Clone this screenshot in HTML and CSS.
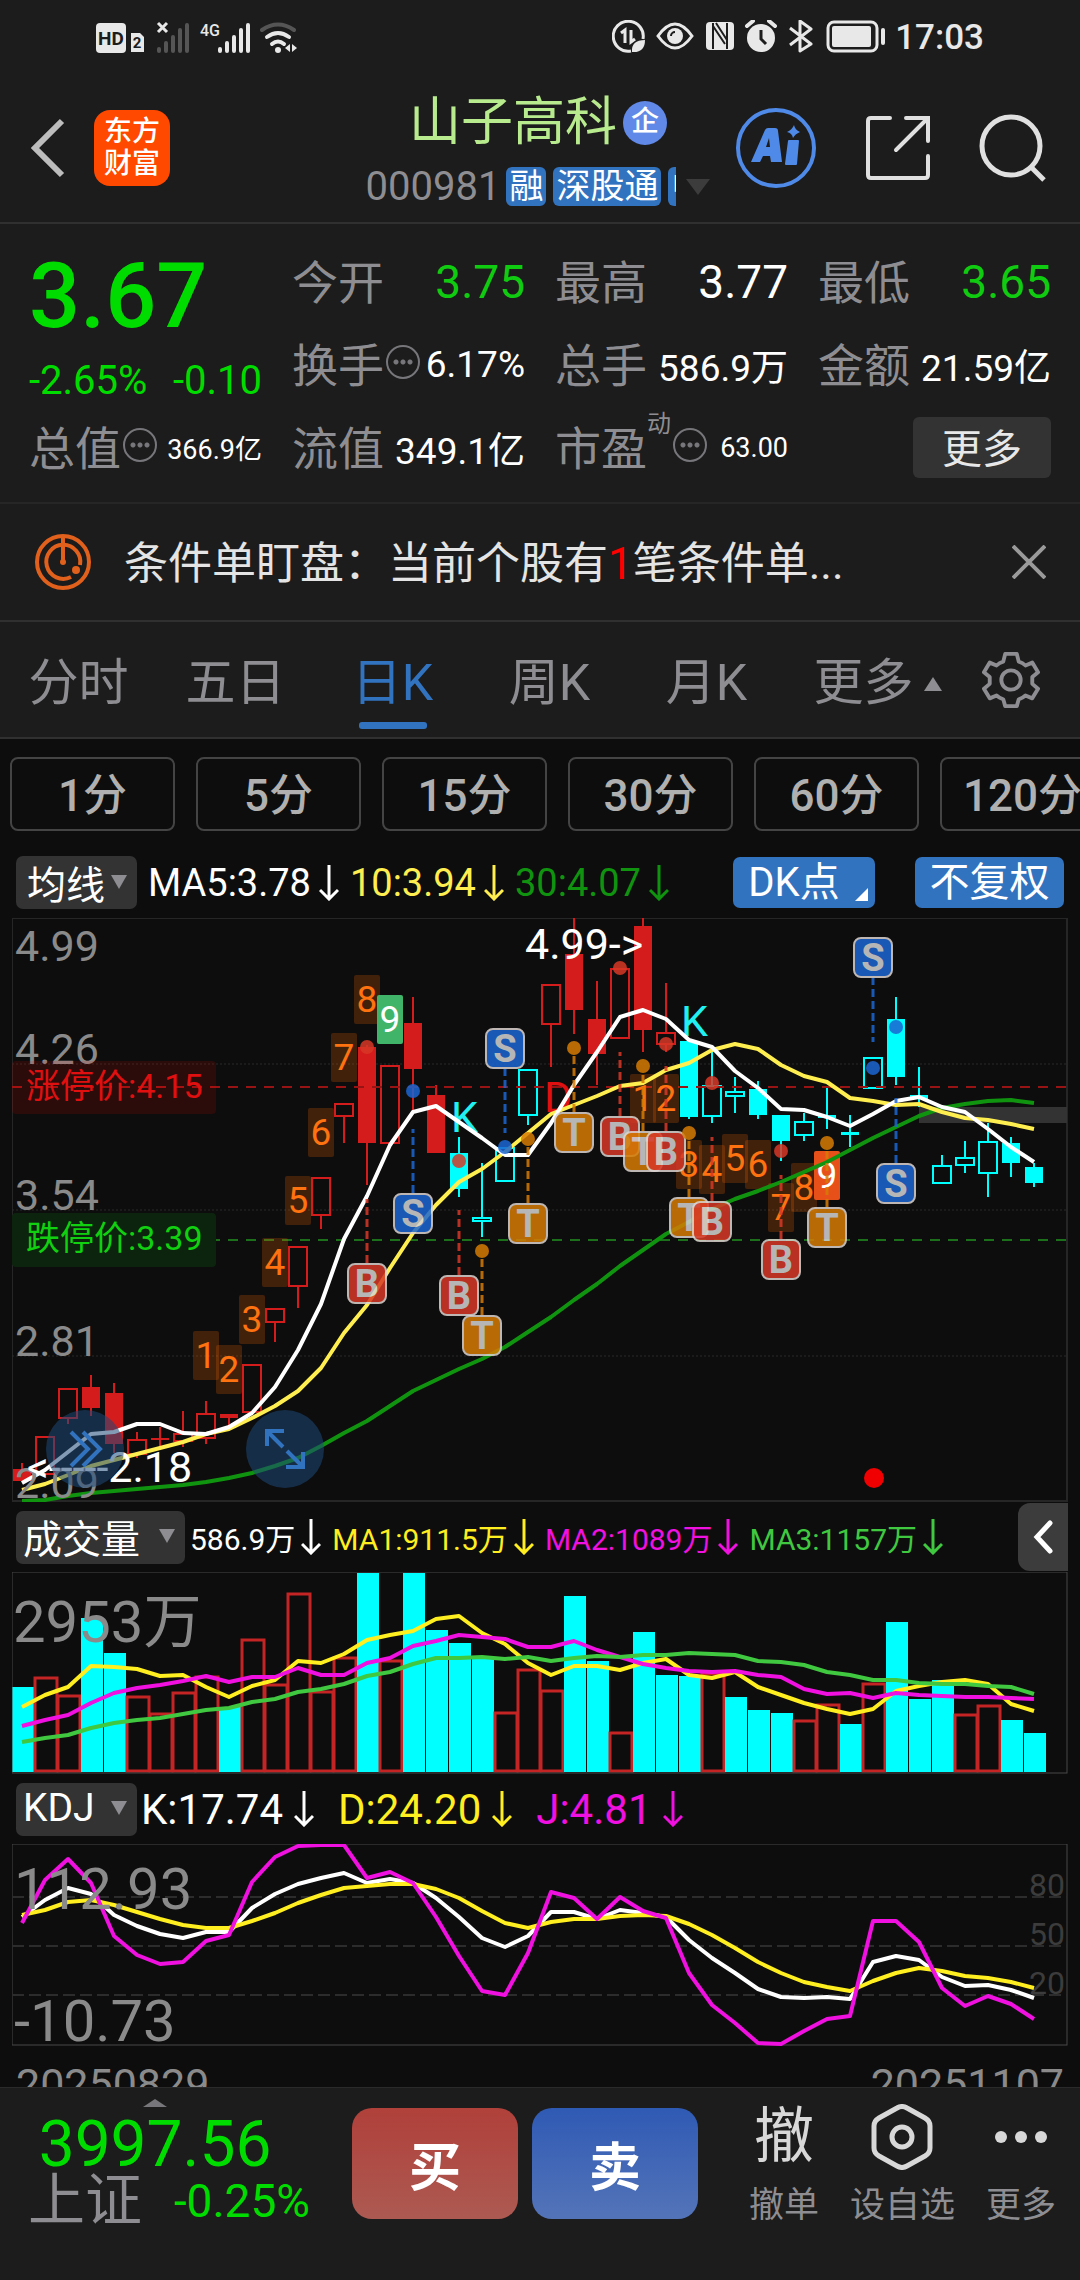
FILE: index.html
```html
<!DOCTYPE html>
<html lang="zh-CN">
<head>
    <meta charset="UTF-8">
    <meta name="viewport" content="width=device-width, initial-scale=1.0">
    <title>山子高科 000981</title>
    <link rel="stylesheet" href="styles.css">
</head>
<body>
    <div class="status-bar">
        <div class="status-group">
            <svg width="202" height="32" viewBox="0 0 202 32" aria-hidden="true">
                <rect x="0" y="2" width="30" height="30" rx="4" fill="#e8e8e8"/>
                <text x="15" y="24" font-size="19" font-weight="700" fill="#1c1c1c" text-anchor="middle">HD</text>
                <path d="M35 12h9l4 4v15H35z" fill="#e8e8e8"/>
                <text x="41" y="27" font-size="15" font-weight="700" fill="#1c1c1c" text-anchor="middle">2</text>
                <path d="M62 2l9 9M71 2l-9 9" stroke="#e8e8e8" stroke-width="3"/>
                <path d="M63 28v2M70 22v8M77 16v14M84 9v21M91 4v26" stroke="#555" stroke-width="4" stroke-linecap="round"/>
                <text x="104" y="15" font-size="16" font-weight="500" fill="#e8e8e8">4G</text>
                <path d="M124 28v2M131 22v8M138 16v14M145 9v21M152 4v26" stroke="#e8e8e8" stroke-width="4" stroke-linecap="round"/>
                <g fill="none" stroke-width="4" stroke-linecap="round">
                    <path d="M166 9q16-11 32 0" stroke="#555"/>
                    <path d="M171 16q11-8 22 0M176 23q6-5 12 0" stroke="#e8e8e8"/>
                </g>
                <circle cx="182" cy="29" r="3" fill="#e8e8e8"/>
                <path d="M189 27l5-4v8zM196 23l5 4-5 4z" fill="#e8e8e8"/>
            </svg>
        </div>
        <div class="status-group">
            <svg width="275" height="34" viewBox="0 0 275 34" aria-hidden="true">
                <g fill="none" stroke="#e8e8e8" stroke-width="3">
                    <path d="M31 19a15 15 0 1 0-12 12"/>
                    <path d="M9 13l4-3v13M19 10v12l4-3" stroke-width="3"/>
                    <path d="M46 16q17-24 34 0q-17 24-34 0z"/>
                </g>
                <path d="M20 32q-1-12 13-12q0 13-13 12z" fill="#e8e8e8"/>
                <circle cx="63" cy="16" r="8" fill="#e8e8e8"/>
                <path d="M59 16a4 4 0 0 1 4-4" stroke="#1c1c1c" stroke-width="2" fill="none"/>
                <rect x="94" y="2" width="28" height="28" rx="4" fill="#e8e8e8"/>
                <path d="M101 3v26M101 6l12 18M115 29V3M104 3l11 17" stroke="#1c1c1c" stroke-width="2" fill="none"/>
                <circle cx="149" cy="18" r="14" fill="#e8e8e8"/>
                <path d="M149 10v9l5 5" stroke="#1c1c1c" stroke-width="3" fill="none"/>
                <path d="M135 6l6-5M157 1l6 5" stroke="#e8e8e8" stroke-width="4" stroke-linecap="round"/>
                <path d="M178 8l21 16-11 7V1l11 8-21 16" stroke="#e8e8e8" stroke-width="3" fill="none" stroke-linejoin="round"/>
                <rect x="216" y="2" width="49" height="29" rx="6" fill="none" stroke="#e8e8e8" stroke-width="3"/>
                <rect x="220" y="6" width="39" height="21" rx="2" fill="#e8e8e8"/>
                <path d="M271 10v13" stroke="#e8e8e8" stroke-width="4" stroke-linecap="round"/>
            </svg>
            <span class="clock">17:03</span>
        </div>
    </div>

    <header class="header">
        <button class="icon-btn" aria-label="返回">
            <svg width="34" height="60" viewBox="0 0 34 60"><path d="M31 3L4 30l27 27" fill="none" stroke="#bdbdbd" stroke-width="6"/></svg>
        </button>
        <a href="#" class="logo">东方<br>财富</a>
        <div class="title-block">
            <div class="title-row">
                <h1>山子高科</h1>
                <span class="company-badge">企</span>
            </div>
            <div class="code-row">
                <span class="code">000981</span>
                <div class="tags">
                    <span class="tag">融</span>
                    <span class="tag">深股通</span>
                    <span class="tag">中</span>
                </div>
                <svg width="24" height="16" viewBox="0 0 24 16"><path d="M0 0h24L12 16z" fill="#3c3c3c"/></svg>
            </div>
        </div>
        <div class="header-actions">
            <button class="icon-btn" aria-label="AI">
                <svg width="82" height="82" viewBox="0 0 82 82">
                    <circle cx="41" cy="41" r="38" fill="none" stroke="#4f8ae8" stroke-width="4"/>
                    <path d="M16 55l14-32q1-2 3-2h7q3 0 3 3l4 31h-11l-1-6h-7l-3 6zM31 40h4l-1-9z" fill="#4f8ae8"/>
                    <path d="M54 34h9l-2 23h-10z" fill="#4f8ae8" stroke="#4f8ae8" stroke-width="2" stroke-linejoin="round"/>
                    <path d="M59 18q1 5 6 7q-5 2-7 6q-1-5-6-6q5-2 7-7z" fill="#4f8ae8"/>
                </svg>
            </button>
            <button class="icon-btn" aria-label="分享">
                <svg width="66" height="66" viewBox="0 0 66 66"><path d="M25 3H6q-3 0-3 3v54q0 3 3 3h54q3 0 3-3V41M41 3h22v23M62 4L31 35" fill="none" stroke="#e0e0e0" stroke-width="4" stroke-linecap="round"/></svg>
            </button>
            <button class="icon-btn" aria-label="搜索">
                <svg width="68" height="68" viewBox="0 0 68 68"><circle cx="32" cy="32" r="29" fill="none" stroke="#e0e0e0" stroke-width="5"/><path d="M52 53l13 13" stroke="#e0e0e0" stroke-width="5"/></svg>
            </button>
        </div>
    </header>

    <section class="quote">
        <div class="price-cell">
            <div class="price">3.67</div>
            <div class="change"><span>-2.65%</span><span>-0.10</span></div>
        </div>
        <div class="cell"><span class="name">今开</span><span class="big green">3.75</span></div>
        <div class="cell"><span class="name">最高</span><span class="big">3.77</span></div>
        <div class="cell"><span class="name">最低</span><span class="big green">3.65</span></div>
        <div class="cell"><span class="name">换手<i class="more-dots"></i></span><span class="mid">6.17%</span></div>
        <div class="cell"><span class="name">总手</span><span class="mid">586.9万</span></div>
        <div class="cell"><span class="name">金额</span><span class="mid">21.59亿</span></div>
        <div class="cell"><span class="name">总值<i class="more-dots"></i></span><span class="small">366.9亿</span></div>
        <div class="cell"><span class="name">流值</span><span class="mid">349.1亿</span></div>
        <div class="cell"><span class="name">市盈<sup>动</sup><i class="more-dots"></i></span><span class="small">63.00</span></div>
        <div class="cell cell-right"><button class="more-btn">更多</button></div>
    </section>

    <section class="alert">
        <svg width="58" height="58" viewBox="0 0 58 58" fill="none" stroke="#e0601c" stroke-width="4">
            <circle cx="29" cy="29" r="26"/>
            <path d="M37 44a17 17 0 1 1 9-12"/>
            <path d="M29 4v26"/>
            <circle cx="29" cy="29" r="3" fill="#e0601c" stroke="none"/>
            <circle cx="42" cy="37" r="4" fill="#e0601c" stroke="none"/>
        </svg>
        <p>条件单盯盘：当前个股有<em>1</em>笔条件单...</p>
        <button class="icon-btn" aria-label="关闭">
            <svg width="34" height="34" viewBox="0 0 34 34"><path d="M1 1l32 32M33 1L1 33" stroke="#9a9a9a" stroke-width="4"/></svg>
        </button>
    </section>

    <nav class="tabs">
        <a href="#">分时</a>
        <a href="#">五日</a>
        <a href="#" class="active">日K</a>
        <a href="#">周K</a>
        <a href="#">月K</a>
        <a href="#" class="tab-more">更多<svg width="18" height="14" viewBox="0 0 18 14"><path d="M9 0l9 14H0z" fill="#8e8e92"/></svg></a>
        <button class="icon-btn" aria-label="设置">
            <svg width="58" height="60" viewBox="-1 0 60 60" fill="none" stroke="#8e8e92" stroke-width="4" stroke-linejoin="round">
                <path d="M23 3h12l2 8q4 1 7 4l7-3 6 10-6 5v7l6 5-6 10-7-3q-3 3-7 4l-2 7H23l-2-7q-4-1-7-4l-7 3-6-10 6-5v-7l-6-5 6-10 7 3q3-3 7-4z"/>
                <circle cx="29" cy="30" r="10"/>
            </svg>
        </button>
    </nav>

    <div class="periods">
        <button>1分</button>
        <button>5分</button>
        <button>15分</button>
        <button>30分</button>
        <button>60分</button>
        <button>120分</button>
    </div>

    <div class="indicator ma-row">
        <button class="picker">均线<i class="tri"></i></button>
        <span class="reading white">MA5:3.78<svg class="down"><use href="#down"/></svg></span>
        <span class="reading yellow">10:3.94<svg class="down"><use href="#down"/></svg></span>
        <span class="reading dark-green">30:4.07<svg class="down"><use href="#down"/></svg></span>
        <div class="ma-actions">
            <button class="blue-btn dk">DK点</button>
            <button class="blue-btn">不复权</button>
        </div>
    </div>
    <div class="chart">
        <svg id="mainChart" viewBox="12 918 1056 584"></svg>
        <button class="round-btn round-next" aria-label="前进">
            <svg width="36" height="38" viewBox="0 0 36 38"><path d="M4 2l17 17L4 36M16 2l17 17-17 17" fill="none" stroke="#3273c0" stroke-width="4"/></svg>
        </button>
        <button class="round-btn round-full" aria-label="全屏">
            <svg width="40" height="40" viewBox="0 0 40 40"><path d="M2 17V2h17M2 2l16 16M38 23v15H21M38 38L22 22" fill="none" stroke="#3273c0" stroke-width="4"/></svg>
        </button>
    </div>

    <div class="indicator vol-row">
        <button class="picker">成交量<i class="tri"></i></button>
        <span class="reading white">586.9万<svg class="down"><use href="#down"/></svg></span>
        <span class="reading bright-yellow">MA1:911.5万<svg class="down"><use href="#down"/></svg></span>
        <span class="reading magenta">MA2:1089万<svg class="down"><use href="#down"/></svg></span>
        <span class="reading light-green">MA3:1157万<svg class="down"><use href="#down"/></svg></span>
        <button class="fold-btn" aria-label="展开">
            <svg width="20" height="34" viewBox="0 0 20 34"><path d="M17 3L4 17l13 14" fill="none" stroke="#fff" stroke-width="5" stroke-linecap="round"/></svg>
        </button>
    </div>
    <div class="chart">
        <svg id="volChart" viewBox="12 1572 1056 202"></svg>
    </div>

    <div class="indicator kdj-row">
        <button class="picker">KDJ<i class="tri"></i></button>
        <span class="reading white">K:17.74<svg class="down"><use href="#down"/></svg></span>
        <span class="reading bright-yellow">D:24.20<svg class="down"><use href="#down"/></svg></span>
        <span class="reading magenta">J:4.81<svg class="down"><use href="#down"/></svg></span>
    </div>
    <div class="chart">
        <svg id="kdjChart" viewBox="12 0 1056 202"></svg>
    </div>
    <div class="dates"><span>20250829</span><span>20251107</span></div>

    <footer class="bottom-bar">
        <a href="#" class="index-box">
            <svg width="24" height="8" viewBox="0 0 24 8"><path d="M12 0l12 8H0z" fill="#77777b"/></svg>
            <span class="index-value">3997.56</span>
            <span class="index-line"><span class="index-name">上证</span><span class="index-change">-0.25%</span></span>
        </a>
        <button class="trade buy">买</button>
        <button class="trade sell">卖</button>
        <div class="tools">
            <button class="tool"><span class="tool-icon">撤</span>撤单</button>
            <button class="tool">
                <span class="tool-icon"><svg width="62" height="66" viewBox="0 0 62 66" fill="none" stroke="#d8d8d8" stroke-width="5"><path d="M26 4q5-3 10 0l18 10q5 3 5 8v22q0 5-5 8L36 62q-5 3-10 0L8 52q-5-3-5-8V22q0-5 5-8z"/><circle cx="31" cy="33" r="10"/></svg></span>设自选
            </button>
            <button class="tool">
                <span class="tool-icon"><svg width="52" height="12" viewBox="0 0 52 12" fill="#d8d8d8"><circle cx="6" cy="6" r="6"/><circle cx="26" cy="6" r="6"/><circle cx="46" cy="6" r="6"/></svg></span>更多
            </button>
        </div>
    </footer>

    <svg width="0" height="0" class="defs">
        <symbol id="down" viewBox="0 0 20 36"><path d="M10 0v34M1 25l9 9 9-9" fill="none" stroke="currentColor" stroke-width="3"/></symbol>
    </svg>

    <script>
        const STEP = 23;
        const FIRST = 22;
        const xAt = i => FIRST + STEP * i;

        // [high, top, bottom, low, kind]  F = filled, H = hollow, r = red, c = cyan
        const candles = [
            [1463, 1469, 1481, 1481, 'rF'], [1436, 1436, 1475, 1475, 'rH'], [1388, 1388, 1419, 1424, 'rH'],
            [1375, 1387, 1408, 1416, 'rF'], [1383, 1393, 1444, 1453, 'rF'], [1432, 1439, 1455, 1458, 'rH'],
            [1427, 1438, 1440, 1447, 'rF'], [1411, 1433, 1442, 1447, 'rH'], [1401, 1413, 1439, 1444, 'rH'],
            [1414, 1414, 1418, 1427, 'rF'], [1364, 1364, 1413, 1413, 'rH'], [1308, 1308, 1323, 1342, 'rH'],
            [1246, 1246, 1287, 1308, 'rH'], [1177, 1177, 1216, 1229, 'rH'], [1103, 1103, 1117, 1143, 'rH'],
            [1045, 1047, 1143, 1185, 'rF'], [1065, 1065, 1144, 1144, 'rH'], [997, 1023, 1069, 1111, 'rF'],
            [1085, 1095, 1153, 1153, 'rF'], [1137, 1153, 1189, 1197, 'cF'], [1163, 1217, 1222, 1237, 'cH'],
            [1147, 1147, 1182, 1182, 'cH'], [1069, 1069, 1116, 1125, 'cH'], [984, 984, 1025, 1067, 'rH'],
            [918, 954, 1010, 1034, 'rF'], [981, 1019, 1054, 1085, 'rF'], [968, 968, 1039, 1039, 'rH'],
            [918, 926, 1030, 1052, 'rF'], [983, 1032, 1045, 1052, 'rH'], [1041, 1041, 1117, 1119, 'cF'],
            [1050, 1085, 1117, 1123, 'cH'], [1077, 1091, 1097, 1113, 'cH'], [1081, 1089, 1115, 1119, 'cF'],
            [1115, 1115, 1141, 1161, 'cF'], [1113, 1121, 1136, 1141, 'cH'], [1087, 1115, 1118, 1129, 'cF'],
            [1115, 1132, 1135, 1147, 'cF'], [1057, 1057, 1089, 1089, 'cH'], [997, 1019, 1077, 1085, 'cF'],
            [1067, 1095, 1099, 1107, 'cF'], [1155, 1165, 1184, 1184, 'cH'], [1141, 1157, 1166, 1173, 'cH'],
            [1123, 1141, 1174, 1197, 'cH'], [1137, 1143, 1163, 1177, 'cF'], [1163, 1167, 1183, 1187, 'cF']
        ];
        const ma5 = [1483, 1470, 1452, 1434, 1432, 1424, 1424, 1433, 1434, 1427, 1413, 1387, 1350, 1304, 1239, 1196, 1145, 1112, 1106, 1122, 1138, 1155, 1155, 1123, 1085, 1052, 1017, 1010, 1019, 1040, 1047, 1071, 1088, 1109, 1110, 1117, 1126, 1114, 1101, 1097, 1107, 1112, 1129, 1147, 1162];
        const ma10 = [1490, 1484, 1475, 1466, 1460, 1454, 1448, 1442, 1434, 1429, 1418, 1406, 1391, 1368, 1333, 1305, 1268, 1233, 1205, 1182, 1169, 1152, 1133, 1114, 1105, 1096, 1086, 1083, 1070, 1063, 1050, 1044, 1049, 1065, 1076, 1082, 1098, 1101, 1105, 1104, 1112, 1118, 1120, 1124, 1129];
        const ma30 = [1501, 1500, 1496, 1493, 1491, 1489, 1487, 1485, 1482, 1478, 1473, 1466, 1458, 1446, 1433, 1421, 1406, 1391, 1380, 1369, 1359, 1347, 1332, 1317, 1300, 1284, 1266, 1250, 1234, 1222, 1209, 1199, 1191, 1182, 1172, 1162, 1150, 1138, 1127, 1116, 1108, 1104, 1101, 1100, 1103];

        // [candle, count, y]
        const counts = [
            [8, 1, 1355], [9, 2, 1369], [10, 3, 1319], [11, 4, 1262], [12, 5, 1200], [13, 6, 1132], [14, 7, 1057], [15, 8, 999],
            [27, 1, 1098], [28, 2, 1098], [29, 3, 1164], [30, 4, 1169], [31, 5, 1158], [32, 6, 1164], [33, 7, 1207], [34, 8, 1187]
        ];
        // [candle, letter, badge y, dash start, dot y]
        const marks = [
            [15, 'B', 1283, 1199, 1047], [17, 'S', 1213, 1129, 1091], [19, 'B', 1295, 1210, 1161], [20, 'T', 1335, 1251, 1251],
            [21, 'S', 1048, 1133, 1147], [22, 'T', 1223, 1139, 1139], [24, 'T', 1132, 1048, 1048], [26, 'B', 1136, 1052, 968],
            [27, 'T', 1151, 1066, 1066], [28, 'B', 1151, 1066, 1044], [29, 'T', 1217, 1133, 1133], [30, 'B', 1221, 1137, 1083],
            [33, 'B', 1259, 1175, 1151], [35, 'T', 1227, 1143, 1143], [37, 'S', 957, 1042, 1068], [38, 'S', 1183, 1098, 1027]
        ];
        const markColor = { B: '#d83826', S: '#1c66d2', T: '#d67c04' };

        const volumes = [
            'c1687', 'r1678', 'r1696', 'c1618', 'c1653', 'r1697', 'r1714', 'r1693', 'r1677', 'c1707', 'r1640', 'r1685', 'r1594', 'r1692', 'r1658',
            'c1573', 'r1661', 'c1573', 'c1630', 'c1643', 'c1659', 'r1713', 'r1670', 'r1691', 'c1596', 'c1661', 'r1733', 'c1632', 'c1675', 'c1676',
            'r1674', 'c1697', 'c1710', 'c1713', 'r1721', 'r1705', 'c1724', 'r1684', 'c1622', 'c1699', 'c1680', 'r1715', 'r1706', 'c1720', 'c1733'
        ];
        const vol1 = [1707, 1695, 1687, 1666, 1667, 1669, 1676, 1675, 1687, 1697, 1686, 1680, 1661, 1663, 1654, 1640, 1635, 1631, 1619, 1616, 1633, 1644, 1663, 1675, 1666, 1666, 1670, 1663, 1659, 1675, 1678, 1672, 1687, 1695, 1703, 1709, 1714, 1709, 1691, 1686, 1682, 1680, 1684, 1704, 1711];
        const vol2 = [1726, 1720, 1715, 1703, 1693, 1688, 1685, 1681, 1676, 1682, 1677, 1677, 1668, 1675, 1675, 1663, 1658, 1646, 1641, 1635, 1637, 1639, 1647, 1647, 1641, 1650, 1657, 1664, 1668, 1671, 1672, 1671, 1675, 1677, 1689, 1694, 1693, 1698, 1693, 1695, 1696, 1697, 1697, 1698, 1699];
        const vol3 = [1742, 1738, 1735, 1728, 1723, 1720, 1718, 1714, 1710, 1708, 1702, 1699, 1692, 1689, 1684, 1676, 1672, 1664, 1658, 1658, 1657, 1659, 1657, 1661, 1658, 1656, 1657, 1655, 1655, 1653, 1654, 1655, 1661, 1662, 1665, 1672, 1675, 1680, 1680, 1683, 1684, 1684, 1686, 1687, 1694];

        const kLine = [73, 56, 44, 50, 71, 82, 90, 94, 88, 88, 64, 50, 40, 34, 29, 39, 35, 39, 54, 73, 94, 103, 92, 68, 68, 75, 66, 69, 73, 96, 114, 129, 145, 153, 154, 153, 155, 118, 112, 116, 133, 142, 141, 146, 154];
        const dLine = [71, 66, 58, 56, 61, 68, 75, 81, 84, 84, 77, 69, 59, 51, 44, 42, 40, 40, 45, 54, 67, 79, 84, 78, 75, 75, 72, 71, 72, 80, 91, 104, 118, 129, 138, 143, 147, 137, 129, 124, 127, 132, 134, 138, 144];
        const jLine = [79, 36, 15, 39, 92, 111, 120, 118, 97, 91, 38, 13, 2, 1, 1, 34, 28, 39, 73, 112, 147, 151, 109, 48, 54, 75, 53, 67, 74, 129, 161, 179, 199, 200, 187, 175, 172, 77, 77, 98, 144, 162, 152, 160, 175];

        const hline = (y, cls) => `<line x1="12" x2="1067" y1="${y}" y2="${y}" class="${cls}"/>`;
        const curve = (ys, color) => `<polyline class="curve" stroke="${color}" points="${ys.map((y, i) => xAt(i) + ',' + y).join(' ')}"/>`;
        const label = (x, y, text, cls) => `<text x="${x}" y="${y}" class="${cls}">${text}</text>`;

        function candle([high, top, bottom, low, kind], i) {
            const x = xAt(i);
            const color = kind[0] === 'r' ? '#d41c1c' : '#00ffff';
            let s = `<path d="M${x} ${high}V${top}M${x} ${bottom}V${low}" stroke="${color}" stroke-width="2"/>`;
            if (kind[1] === 'F') {
                s += `<rect x="${x - 9}" y="${top}" width="18" height="${bottom - top}" fill="${color}"/>`;
            } else {
                s += `<rect x="${x - 9}" y="${top + 1}" width="18" height="${bottom - top - 2}" fill="none" stroke="${color}" stroke-width="2"/>`;
            }
            return s;
        }

        function tile(x, y, n, cls) {
            return `<rect x="${x - 13}" y="${y - 24}" width="26" height="49" rx="2" class="${cls}"/>` +
                `<text x="${x}" y="${y + 13}" class="tile-text ${cls}-text">${n}</text>`;
        }

        function mark([i, letter, y, from, dot]) {
            const x = xAt(i);
            const end = y > from ? y - 20 : y + 20;
            const color = markColor[letter];
            return `<g opacity=".85"><line x1="${x}" x2="${x}" y1="${end}" y2="${from}" stroke="${color}" stroke-width="3" stroke-dasharray="8 4"/>` +
                `<circle cx="${x}" cy="${dot}" r="7" fill="${color}"/>` +
                `<rect x="${x - 19}" y="${y - 19}" width="38" height="39" rx="7" fill="${color}" stroke="#dcd4d0" stroke-width="2"/>` +
                `<text x="${x}" y="${y + 14}" class="mark-text">${letter}</text></g>`;
        }

        document.getElementById('mainChart').innerHTML =
            '<rect x="12" y="918" width="1055" height="583" class="frame"/>' +
            hline(1064, 'grid') + hline(1210, 'grid') + hline(1356, 'grid') +
            '<rect x="919" y="1107" width="148" height="16" fill="#333"/>' +
            candles.map(candle).join('') +
            hline(1087, 'limit-up') + hline(1240, 'limit-down') +
            label(451, 1132, 'K', 'signal cyan') + label(681, 1036, 'K', 'signal cyan') + label(544, 1112, 'D', 'signal red') +
            counts.map(([i, n, y]) => tile(xAt(i), y, n, 'tile')).join('') +
            tile(390, 1019, 9, 'tile-green') + tile(827, 1175, 9, 'tile-orange') +
            curve(ma30, '#109410') + curve(ma10, '#ffee50') + curve(ma5, '#fff') +
            marks.map(mark).join('') +
            label(15, 961, '4.99', 'axis') + label(15, 1064, '4.26', 'axis') + label(15, 1210, '3.54', 'axis') +
            label(15, 1356, '2.81', 'axis') + label(15, 1498, '2.09', 'axis') +
            label(525, 959, '4.99-&gt;', 'peak') + label(27, 1482, '&lt;-----2.18', 'peak') +
            '<rect x="12" y="1061" width="204" height="53" rx="4" fill="#f00" fill-opacity=".13"/>' + label(26, 1098, '涨停价:4.15', 'limit-text red') +
            '<rect x="12" y="1213" width="204" height="54" rx="4" fill="#0c240e"/>' + label(26, 1250, '跌停价:3.39', 'limit-text green') +
            '<circle cx="874" cy="1478" r="10" fill="#f00000"/>';

        document.getElementById('volChart').innerHTML =
            volumes.map((v, i) => {
                const top = Number(v.slice(1));
                return v[0] === 'c'
                    ? `<rect x="${xAt(i) - 10}" y="${top}" width="22" height="${1772 - top}" fill="#00ffff"/>`
                    : `<rect x="${xAt(i) - 10}" y="${top}" width="22" height="${1771 - top}" fill="none" stroke="#c42424" stroke-width="3"/>`;
            }).join('') +
            '<rect x="12" y="1572" width="1055" height="201" class="frame light"/>' +
            label(13, 1642, '2953万', 'axis large') +
            curve(vol1, '#ffee20') + curve(vol2, '#f010e0') + curve(vol3, '#40c840');

        document.getElementById('kdjChart').innerHTML =
            '<rect x="12" y="0" width="1055" height="201" class="frame light"/>' +
            hline(53, 'level') + hline(102, 'level') + hline(151, 'level') +
            label(1065, 52, '80', 'level-text') + label(1065, 101, '50', 'level-text') + label(1065, 150, '20', 'level-text') +
            curve(kLine, '#fff') + curve(dLine, '#ffee20') + curve(jLine, '#f010e0') +
            label(14, 65, '112.93', 'axis large') + label(14, 197, '-10.73', 'axis large');
    </script>
</body>
</html>
```
FILE: styles.css
```css
* {
    box-sizing: border-box;
}
body {
    margin: 0;
    padding-bottom: 160px;
    background-color: #0d0d0d;
    color: #fff;
    font-family: Roboto, "Noto Sans CJK SC", sans-serif;
    overflow-x: hidden;
}
button {
    margin: 0;
    padding: 0;
    border: 0;
    background: none;
    color: inherit;
    font: inherit;
}
a {
    color: inherit;
    text-decoration: none;
}
svg {
    display: block;
    flex: none;
}
.defs {
    position: absolute;
}
.icon-btn {
    flex: none;
}

/* status bar */
.status-bar {
    display: flex;
    justify-content: space-between;
    align-items: center;
    height: 74px;
    padding: 0 96px;
    background-color: #1c1c1c;
}
.status-group {
    display: flex;
    align-items: center;
    gap: 8px;
}
.clock {
    color: #e8e8e8;
    font-size: 35px;
    font-weight: 500;
}

/* header */
.header {
    display: flex;
    align-items: center;
    height: 150px;
    padding: 0 33px 0 31px;
    background-color: #1c1c1c;
    border-bottom: 2px solid #303030;
}
.logo {
    width: 76px;
    height: 76px;
    margin-left: 29px;
    padding-top: 6px;
    border-radius: 16px;
    background-color: #ff4800;
    font-size: 28px;
    font-weight: 500;
    line-height: 32px;
    text-align: center;
}
.title-block {
    flex: 1;
    display: flex;
    flex-direction: column;
    align-items: center;
    padding-top: 9px;
    padding-left: 195px;
}
.title-row {
    display: flex;
    align-items: center;
    gap: 6px;
}
h1 {
    margin: 0;
    color: #b8ea8e;
    font-size: 52px;
    font-weight: 400;
    line-height: 68px;
}
.company-badge {
    width: 44px;
    height: 44px;
    border-radius: 50%;
    background-color: #6189e8;
    font-size: 28px;
    font-weight: 500;
    line-height: 42px;
    text-align: center;
}
.code-row {
    display: flex;
    align-items: center;
    height: 60px;
}
.code {
    color: #8e8e92;
    font-size: 40px;
}
.tags {
    display: flex;
    gap: 7px;
    width: 170px;
    margin: 0 10px 0 6px;
    overflow: hidden;
}
.tag {
    flex: none;
    padding: 0 3px;
    border-radius: 6px;
    background-color: #3273c0;
    font-size: 34px;
    line-height: 39px;
}
.header-actions {
    display: flex;
    align-items: center;
    gap: 48px;
    margin-left: 24px;
}

/* quote */
.quote {
    display: grid;
    grid-template-columns: repeat(4, 1fr);
    grid-auto-rows: 83px;
    column-gap: 30px;
    padding: 16px 29px 13px;
    background-color: #1c1c1c;
    border-bottom: 2px solid #262626;
}
.price-cell {
    grid-row: span 2;
    color: #00dc00;
}
.price {
    font-size: 90px;
    font-weight: 500;
    line-height: 114px;
}
.change {
    display: flex;
    justify-content: space-between;
    font-size: 40px;
    line-height: 54px;
}
.cell {
    display: flex;
    justify-content: space-between;
    align-items: center;
    white-space: nowrap;
}
.cell-right {
    justify-content: flex-end;
}
.name {
    display: flex;
    align-items: center;
    padding-bottom: 6px;
    color: #8e8e92;
    font-size: 46px;
}
.name sup {
    align-self: flex-start;
    font-size: 24px;
    line-height: 24px;
}
.more-dots {
    width: 34px;
    height: 34px;
    margin-left: 2px;
    border: 2px solid #77777b;
    border-radius: 50%;
    background: radial-gradient(circle, #77777b 2px, transparent 3px) center / 8px 8px no-repeat,
        radial-gradient(circle, #77777b 2px, transparent 3px) 4px center / 8px 8px no-repeat,
        radial-gradient(circle, #77777b 2px, transparent 3px) 18px center / 8px 8px no-repeat;
}
.big {
    font-size: 46px;
}
.mid {
    font-size: 37px;
}
.small {
    font-size: 27px;
}
.more-btn {
    width: 138px;
    height: 61px;
    padding-bottom: 4px;
    border-radius: 6px;
    background-color: #333;
    font-size: 40px;
    color: #e8e8e8;
}

/* alert */
.alert {
    display: flex;
    align-items: center;
    height: 118px;
    padding: 0 34px;
    background-color: #1c1c1c;
    border-bottom: 2px solid #303030;
}
.alert p {
    flex: 1;
    margin: 0 0 0 32px;
    padding-bottom: 4px;
    color: #e4e4e4;
    font-size: 44px;
}
.alert em {
    color: #f00;
    font-style: normal;
}

/* tabs */
.tabs {
    display: flex;
    align-items: center;
    height: 117px;
    padding-right: 40px;
    background-color: #1c1c1c;
    border-bottom: 2px solid #303030;
    color: #8e8e92;
    font-size: 50px;
}
.tabs a {
    position: relative;
    flex: 157;
    padding-top: 8px;
    line-height: 107px;
    text-align: center;
}
.tabs .tab-more {
    display: flex;
    flex: 185;
    align-items: center;
    justify-content: center;
    gap: 10px;
    padding-right: 12px;
}
.tabs .active {
    color: #3273c0;
}
.tabs .active::after {
    content: "";
    position: absolute;
    left: calc(50% - 34px);
    bottom: 8px;
    width: 68px;
    height: 7px;
    border-radius: 3px;
    background-color: #3273c0;
}

/* minute periods */
.periods {
    display: flex;
    gap: 21px;
    padding: 18px 0 0 10px;
    overflow: hidden;
}
.periods button {
    flex: none;
    width: 165px;
    height: 74px;
    padding-bottom: 4px;
    border: 2px solid #444;
    border-radius: 8px;
    color: #b0b0b0;
    font-size: 44px;
    font-weight: 500;
    white-space: nowrap;
}

/* indicator rows */
.indicator {
    display: flex;
    align-items: center;
    height: 70px;
    padding-left: 16px;
}
.ma-row {
    height: 87px;
    padding-top: 16px;
    padding-right: 16px;
    font-size: 38px;
}
.vol-row {
    padding-right: 12px;
    font-size: 30px;
}
.kdj-row {
    font-size: 42px;
}
.picker {
    display: flex;
    align-items: center;
    justify-content: space-between;
    height: 53px;
    padding: 0 10px 2px 7px;
    border-radius: 7px;
    background-color: #333;
    font-size: 39px;
    white-space: nowrap;
}
.ma-row .picker,
.kdj-row .picker {
    width: 121px;
}
.ma-row .picker {
    padding-left: 11px;
}
.vol-row .picker {
    width: 169px;
}
.tri {
    border: 8px solid transparent;
    border-top: 14px solid #8e8e92;
    border-bottom: 0;
}
.reading {
    display: flex;
    align-items: center;
    white-space: nowrap;
}
.down {
    width: 20px;
    height: 36px;
}
.ma-row .reading {
    gap: 8px;
    margin-left: 11px;
}
.vol-row .reading {
    gap: 6px;
    margin-left: 11px;
}
.vol-row .picker + .reading {
    margin-left: 5px;
}
.kdj-row .reading {
    gap: 11px;
    margin-left: 24px;
}
.kdj-row .picker + .reading {
    margin-left: 4px;
}
.ma-actions {
    display: flex;
    gap: 40px;
    margin-left: auto;
}
.blue-btn {
    position: relative;
    width: 149px;
    height: 51px;
    border-radius: 7px;
    background-color: #3273c0;
    font-size: 40px;
    line-height: 49px;
}
.dk {
    width: 142px;
    padding-right: 20px;
}
.dk::after {
    content: "";
    position: absolute;
    right: 7px;
    bottom: 7px;
    border-left: 13px solid transparent;
    border-bottom: 13px solid #fff;
}
.fold-btn {
    display: flex;
    align-items: center;
    justify-content: center;
    width: 50px;
    height: 68px;
    margin-left: auto;
    border-radius: 12px 0 0 12px;
    background-color: #3c3c3c;
}

.white { color: #fff; }
.yellow { color: #ffee50; }
.bright-yellow { color: #ffee20; }
.magenta { color: #f010e0; }
.dark-green { color: #109410; }
.light-green { color: #40c840; }
.quote .green { color: #10cc10; }

/* charts */
.chart {
    position: relative;
    padding: 0 12px;
}
.chart > svg {
    width: 100%;
    height: auto;
}
.frame {
    fill: none;
    stroke: #262626;
    stroke-width: 2;
}
.frame.light {
    stroke: #484848;
    stroke-width: 1;
}
.grid {
    stroke: #2a2a2a;
    stroke-dasharray: 2 2;
}
.limit-up {
    stroke: #981414;
    stroke-width: 2;
    stroke-dasharray: 10 8;
}
.limit-down {
    stroke: #1c701c;
    stroke-width: 2;
    stroke-dasharray: 10 8;
}
.level {
    stroke: #2c2c2c;
    stroke-width: 2;
    stroke-dasharray: 12 5;
}
.level-text {
    fill: #3c3c3c;
    font-size: 32px;
    text-anchor: end;
}
.curve {
    fill: none;
    stroke-width: 4;
    stroke-linejoin: round;
}
.axis {
    fill: #8a8a8a;
    font-size: 43px;
}
.axis.large {
    font-size: 58px;
}
.peak {
    fill: #fff;
    font-size: 43px;
}
.signal {
    font-size: 43px;
}
.limit-text {
    font-size: 34px;
}
.chart .cyan { fill: #20f0f0; }
.chart .red { fill: #e01010; }
.chart .green { fill: #10d010; }
.tile { fill: #ff6a00; fill-opacity: .22; }
.tile-green { fill: #40b468; }
.tile-orange { fill: #e8501a; }
.tile-text {
    fill: #ff7210;
    font-size: 37px;
    text-anchor: middle;
}
.tile-green-text,
.tile-orange-text {
    fill: #fff;
}
.mark-text {
    fill: #d4d4d4;
    font-size: 38px;
    font-weight: 700;
    text-anchor: middle;
}
.round-btn {
    position: absolute;
    display: flex;
    align-items: center;
    justify-content: center;
    width: 78px;
    height: 78px;
    border-radius: 50%;
    background-color: rgba(30, 72, 120, .55);
}
.round-next {
    left: 46px;
    bottom: 14px;
}
.round-full {
    left: 246px;
    bottom: 14px;
}
.dates {
    display: flex;
    justify-content: space-between;
    padding: 6px 16px 0;
    color: #8a8a8a;
    font-size: 43px;
    line-height: 64px;
}

/* bottom bar */
.bottom-bar {
    position: fixed;
    left: 0;
    right: 0;
    bottom: 0;
    display: flex;
    height: 193px;
    padding: 0 20px 0 28px;
    background-color: #1c1c1c;
    border-top: 1px solid #2a2a2a;
}
.index-box {
    display: flex;
    flex-direction: column;
    align-items: center;
    width: 282px;
    margin-right: 42px;
    padding-top: 11px;
}
.index-value {
    margin-right: 28px;
    color: #00dc00;
    font-size: 64px;
    line-height: 76px;
}
.index-box svg {
    margin-right: 28px;
}
.index-line {
    display: flex;
    justify-content: space-between;
    align-items: center;
    align-self: stretch;
    line-height: 36px;
}
.index-name {
    color: #8e8e92;
    font-size: 57px;
}
.index-change {
    color: #00dc00;
    font-size: 46px;
}
.trade {
    width: 166px;
    height: 111px;
    margin: 20px 14px 0 0;
    border-radius: 20px;
    font-size: 52px;
    font-weight: 700;
}
.buy {
    background: linear-gradient(#b0403a, #ac5a52);
}
.sell {
    background: linear-gradient(#2f5ab4, #5474b8);
}
.tools {
    flex: 1;
    display: flex;
    justify-content: flex-end;
    gap: 19px;
}
.tool {
    display: flex;
    flex-direction: column;
    align-items: center;
    padding: 14px 6px 0;
    color: #8e8e92;
    font-size: 35px;
    line-height: 50px;
    white-space: nowrap;
}
.tool:last-child {
    padding-right: 4px;
}
.tool-icon {
    display: flex;
    align-items: center;
    height: 70px;
    margin-bottom: 9px;
    color: #d8d8d8;
    font-size: 60px;
}
```
